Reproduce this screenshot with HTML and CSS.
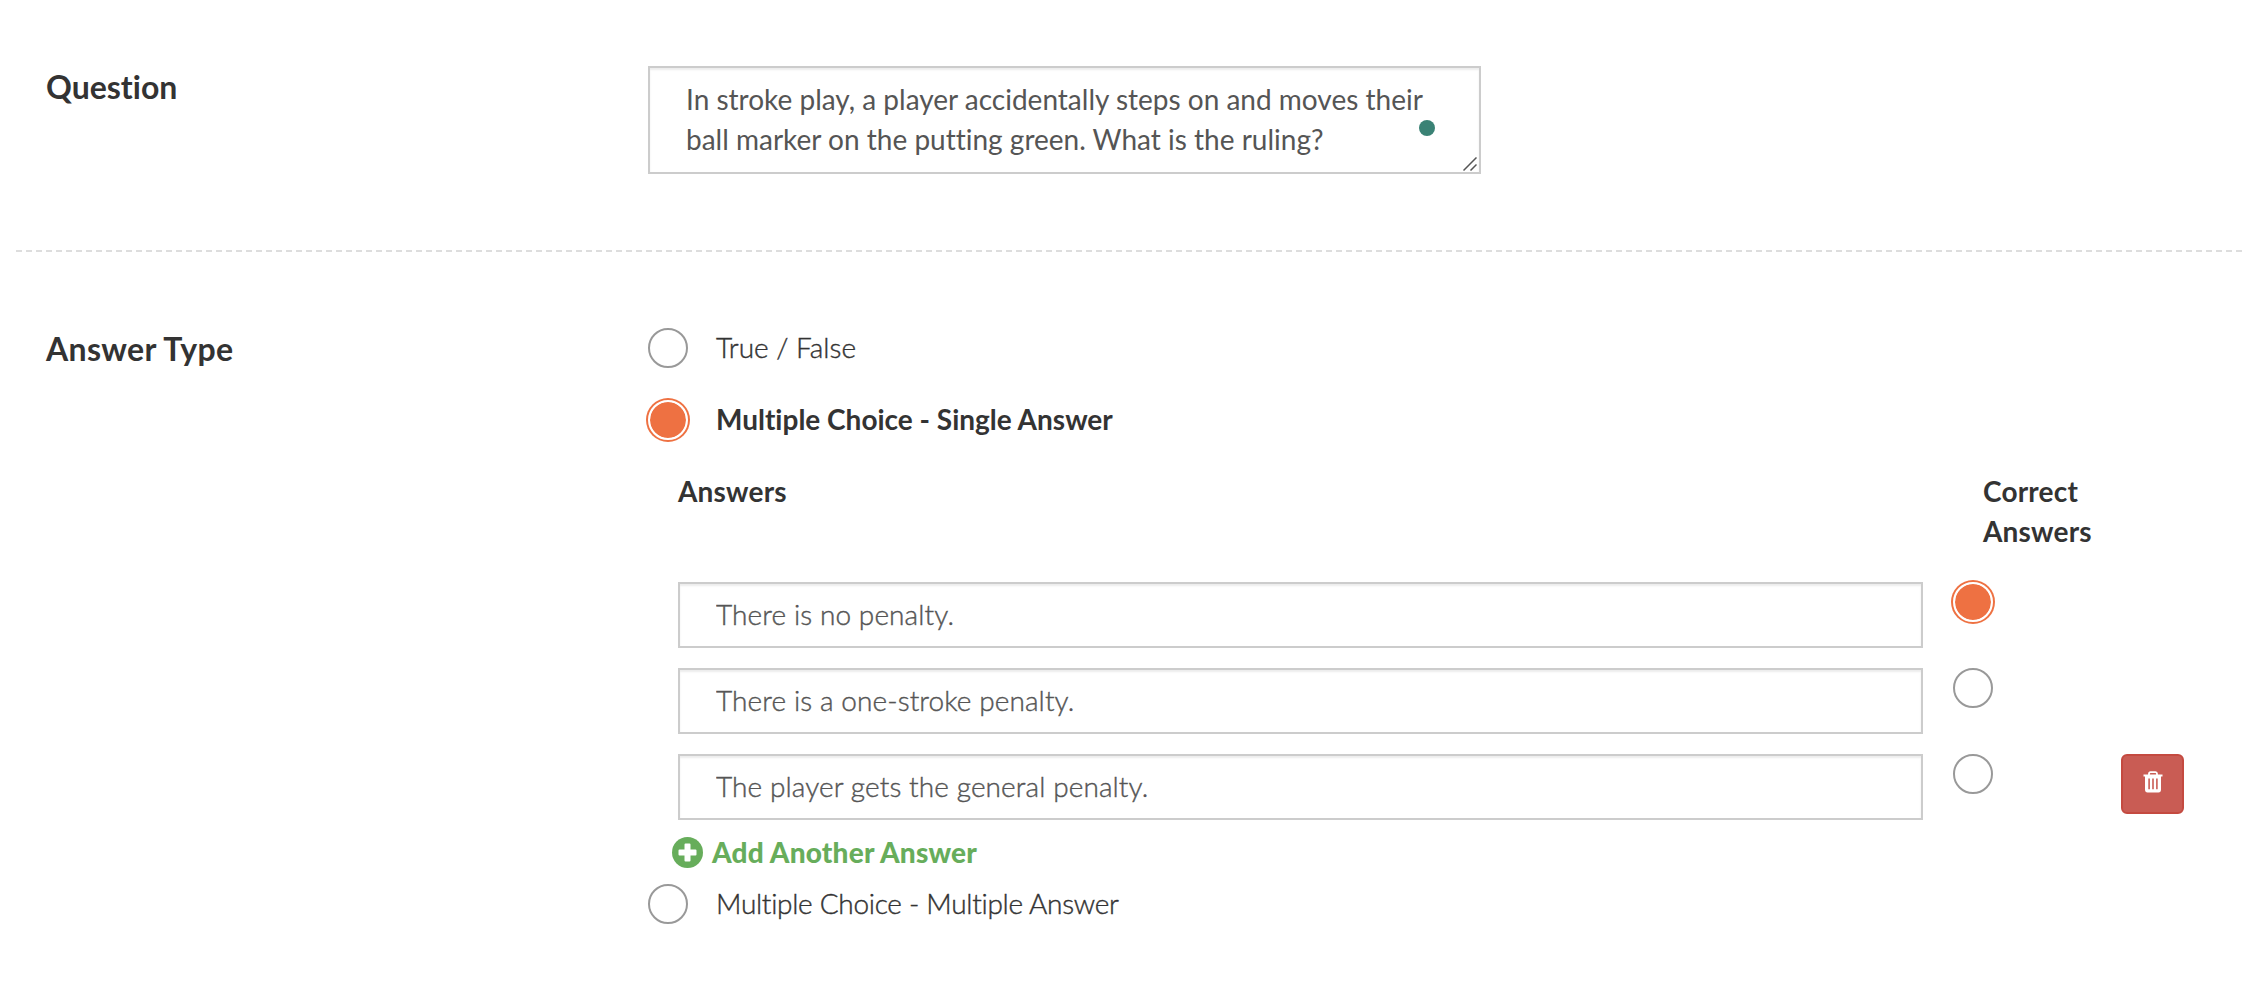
FILE: index.html
```html
<!DOCTYPE html>
<html lang="en">
<head>
  <meta charset="UTF-8" />
  <title>Edit Question</title>
  <link rel="stylesheet" href="styles.css">
</head>
<body>
  <form class="question-form">
    <div class="form-row">
      <h2>Question</h2>
      <div class="question-box">
        <textarea class="field" id="question">In stroke play, a player accidentally steps on and moves their
ball marker on the putting green. What is the ruling?</textarea>
        <span class="status-dot"></span>
        <svg class="grip" width="14" height="14" viewBox="0 0 14 14"><path d="M0.5 13.5L13.5 0.5M7.5 13.5L13.5 7.5" /></svg>
      </div>
    </div>

    <div class="form-row">
      <h2 class="wide">Answer Type</h2>
      <div class="types">
        <label class="type"><input type="radio" name="type" /><span class="light">True / False</span></label>
        <label class="type"><input type="radio" name="type" checked /><span class="selected">Multiple Choice - Single Answer</span></label>

        <div class="answers">
          <div class="answer-head">
            <strong>Answers</strong>
            <strong class="correct">Correct Answers</strong>
          </div>
          <div class="answer">
            <input type="text" class="field" value="There is no penalty." />
            <input type="radio" name="correct" checked />
          </div>
          <div class="answer">
            <input type="text" class="field" value="There is a one-stroke penalty." />
            <input type="radio" name="correct" />
          </div>
          <div class="answer">
            <input type="text" class="field" value="The player gets the general penalty." />
            <input type="radio" name="correct" />
            <button type="button" class="delete" aria-label="Delete">
              <svg width="20" height="22" viewBox="0 0 20 22">
                <path class="lid" d="M0.5 4.5H19.5M6 4V2.8Q6 1.2 7.5 1.2H12.5Q14 1.2 14 2.8V4" />
                <path class="can" fill-rule="evenodd" d="M2 4H18V18.5Q18 21.5 15.5 21.5H4.5Q2 21.5 2 18.5ZM5.3 7.5V18.3H6.9V7.5ZM9.2 7.5V18.3H10.8V7.5ZM13.1 7.5V18.3H14.7V7.5Z" />
              </svg>
            </button>
          </div>
        </div>

        <a class="add">
          <svg width="31" height="31" viewBox="0 0 31 31">
            <circle cx="15.5" cy="15.5" r="15.5" />
            <path d="M13.5 6.5h4q1 0 1 1v5h5q1 0 1 1v4q0 1-1 1h-5v5q0 1-1 1h-4q-1 0-1-1v-5h-5q-1 0-1-1v-4q0-1 1-1h5v-5q0-1 1-1z" />
          </svg>
          <span>Add Another Answer</span>
        </a>

        <label class="type last"><input type="radio" name="type" /><span class="light">Multiple Choice - Multiple Answer</span></label>
      </div>
    </div>
  </form>
</body>
</html>
```
FILE: styles.css
```css
* {
  box-sizing: border-box;
}
body {
  margin: 0;
  background: #fff;
  color: #333;
  font-family: Lato, sans-serif;
  font-size: 28px;
  line-height: 40px;
  font-variant-ligatures: none;
  overflow: hidden;
}
.question-form {
  margin-left: 16px;
}
.form-row {
  display: grid;
  grid-template-columns: 602px 1fr;
  padding: 66px 0 76px 30px;
}
.form-row + .form-row {
  border-top: 2px dashed #ddd;
  padding-top: 76px;
}
h2 {
  margin: 1px 0 0;
  font-size: 32px;
  line-height: 40px;
  font-weight: 700;
}
h2.wide {
  letter-spacing: 0.35px;
}
.field {
  display: block;
  margin: 0;
  border: 2px solid #ccc;
  border-radius: 0;
  background: #fff;
  box-shadow: inset 0 2px 2px rgba(0, 0, 0, 0.075);
  color: #555;
  font-family: inherit;
  font-size: 28px;
  font-variant-ligatures: none;
  outline: none;
}
.question-box {
  position: relative;
  width: 833px;
  height: 108px;
}
textarea.field {
  width: 833px;
  height: 108px;
  padding: 11px 36px;
  line-height: 40px;
  white-space: pre;
  resize: none;
  overflow: hidden;
}
.status-dot {
  position: absolute;
  top: 54px;
  right: 46px;
  width: 16px;
  height: 16px;
  border-radius: 50%;
  background: #3a8275;
}
.grip {
  position: absolute;
  right: 4px;
  bottom: 3px;
  fill: none;
  stroke: #555;
  stroke-width: 1.5;
}
input[type="radio"] {
  appearance: none;
  flex: none;
  width: 40px;
  height: 40px;
  margin: 0;
  border: 2px solid #999;
  border-radius: 50%;
  background: #fff;
}
input[type="radio"]:checked {
  border: 2px solid #fff;
  background: #ee7142;
  background-clip: padding-box;
  box-shadow: 0 0 0 2px #ee7142;
}
.type {
  display: flex;
  gap: 28px;
  height: 40px;
  margin-bottom: 32px;
}
.type span,
.add span {
  margin-top: -1px;
}
.light {
  font-weight: 300;
  -webkit-text-stroke: 0.4px;
}
.selected,
strong {
  font-weight: 700;
}
.answers {
  padding-left: 30px;
}
.answer-head {
  display: flex;
  justify-content: space-between;
  margin: -1px 0 31px;
  letter-spacing: 0.2px;
}
.correct {
  width: 130px;
  margin-right: 129px;
}
.answer {
  display: flex;
  align-items: flex-start;
  margin-bottom: 20px;
}
.answer .field {
  width: 1245px;
  height: 66px;
  padding: 0 36px 2px;
  margin-right: 30px;
  font-weight: 300;
  letter-spacing: 0.1px;
  -webkit-text-stroke: 0.4px;
}
.delete {
  display: flex;
  align-items: center;
  justify-content: center;
  width: 63px;
  height: 60px;
  margin-left: 128px;
  padding: 0 0 4px;
  border: 2px solid #c44a40;
  border-radius: 6px;
  background: #c95c54;
}
.lid {
  fill: none;
  stroke: #fff;
  stroke-width: 1.8;
}
.can {
  fill: #fff;
}
.add {
  display: flex;
  align-items: center;
  gap: 9px;
  height: 40px;
  margin: -8px 0 12px 24px;
  color: #67ad5b;
  font-weight: 900;
  letter-spacing: 0.2px;
}
.add circle {
  fill: #67ad5b;
}
.add path {
  fill: #fff;
}
.last {
  margin-bottom: 0;
  letter-spacing: -0.3px;
}
```
